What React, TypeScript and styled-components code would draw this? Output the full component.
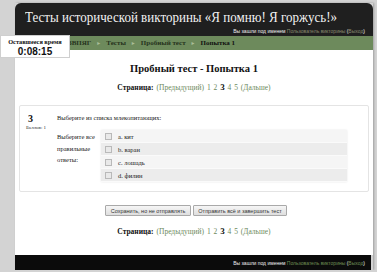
import React from 'react'
import styled, { createGlobalStyle } from 'styled-components'

const GlobalStyle = createGlobalStyle`
  html, body {
    margin: 0;
    padding: 0;
    background: #d3d3d3;
    font-family: 'Liberation Serif', 'Times New Roman', serif;
  }
`

const Page = styled.div`
  position: relative;
  width: 358px;
  margin: 3px 0 0 15px;
  box-shadow: 1px 0 2px rgba(0, 0, 0, 0.25);
`

const Header = styled.header`
  background: #1f1f1f;
  border-radius: 6px 6px 0 0;
  height: 33px;
  padding: 0 8px 0 10px;
  box-sizing: border-box;
  overflow: hidden;
`

const Title = styled.h1`
  margin: 0;
  padding-top: 3px;
  font-size: 15.5px;
  line-height: 21px;
  font-weight: normal;
  color: #f2f2f2;
  white-space: nowrap;
  transform: scaleX(0.84);
  transform-origin: left center;
`

const LoginInfo = styled.div<{ $dark?: boolean }>`
  text-align: right;
  font-size: 5px;
  line-height: 8px;
  color: #f0f0f0;
  font-family: 'Liberation Sans', Arial, sans-serif;
  a {
    color: ${(p) => (p.$dark ? '#6f8f55' : '#8a8a70')};
    text-decoration: none;
  }
`

const NavBar = styled.nav`
  background: #6d8a5c;
  height: 14px;
  display: flex;
  align-items: center;
  gap: 5px;
  padding-left: 32px;
  font-size: 7px;
  font-weight: bold;
  color: #1d2a16;
  white-space: nowrap;
`

const Crumb = styled.span<{ $current?: boolean }>`
  color: ${(p) => (p.$current ? '#101010' : '#26331c')};
`

const Sep = styled.span`
  color: #a9bd98;
  font-size: 5px;
`

const Timer = styled.div`
  position: absolute;
  left: -15px;
  top: 32px;
  width: 70px;
  height: 23px;
  background: #fff;
  border: 1px solid #cfcfcf;
  box-sizing: border-box;
  text-align: center;
`

const TimerLabel = styled.div`
  font-size: 6.3px;
  font-weight: bold;
  line-height: 9px;
  color: #111;
  padding-top: 1px;
`

const TimerValue = styled.div`
  font-family: 'Liberation Sans', Arial, sans-serif;
  font-size: 10px;
  font-weight: bold;
  line-height: 11px;
  color: #111;
`

const Content = styled.main`
  background: #fff;
  height: 205px;
  padding: 12px 4px 0;
  box-sizing: border-box;
`

const QuizTitle = styled.h2`
  margin: 0;
  text-align: center;
  font-size: 10.5px;
  line-height: 14px;
  font-weight: bold;
  color: #111;
`

const Paging = styled.div<{ $top: number }>`
  margin-top: ${(p) => p.$top}px;
  text-align: center;
  font-size: 7.5px;
  line-height: 10px;
  color: #6d8a5c;
  word-spacing: 1px;
  b {
    color: #111;
  }
  strong {
    color: #111;
    font-size: 9px;
  }
`

const Question = styled.section`
  margin-top: 12px;
  height: 87px;
  border: 1px solid #e4e4e4;
  border-radius: 2px;
  display: flex;
  padding: 7px 0 0 8px;
  box-sizing: border-box;
`

const Info = styled.div`
  width: 29px;
  flex: none;
`

const QNum = styled.div`
  font-size: 10px;
  font-weight: bold;
  line-height: 11px;
  color: #111;
`

const Grade = styled.div`
  margin-left: -2px;
  font-size: 5px;
  line-height: 7px;
  color: #333;
`

const QBody = styled.div`
  flex: 1;
  font-size: 6.5px;
  color: #222;
`

const QText = styled.div`
  line-height: 9px;
`

const Answer = styled.div`
  display: flex;
  margin-top: 8px;
`

const Prompt = styled.div`
  width: 44px;
  line-height: 11.5px;
  margin-top: 1px;
`

const Options = styled.div`
  width: 246px;
  background: #f3f3f3;
  box-shadow: 0 0 2px #e6e6e6;
`

const Option = styled.label<{ $alt?: boolean }>`
  display: flex;
  align-items: center;
  height: 13px;
  padding-left: 4px;
  background: ${(p) => (p.$alt ? '#ececec' : '#f5f5f5')};
  border-bottom: 1px solid #fafafa;
  box-sizing: border-box;
`

const Check = styled.span`
  width: 5px;
  height: 5px;
  border: 1px solid #b9b9b9;
  background: #e9e9e9;
  margin-right: 6px;
`

const Buttons = styled.div`
  margin-top: 13px;
  display: flex;
  justify-content: center;
  gap: 2px;
  padding-left: 4px;
`

const Button = styled.button<{ $w: number }>`
  width: ${(p) => p.$w}px;
  height: 11px;
  padding: 0;
  font-family: 'Liberation Sans', Arial, sans-serif;
  font-size: 5.5px;
  color: #333;
  background: linear-gradient(#f6f6f6, #dedede);
  border: 1px solid #a9a9a9;
  border-radius: 1px;
`

const Footer = styled.footer`
  background: #0b0b0b;
  height: 15px;
  margin-right: 2px;
  padding: 4px 6px 0;
  box-sizing: border-box;
`

const PageLinks = ({ top }: { top: number }) => (
  <Paging $top={top}>
    <b>Страница:</b> (Предыдущий) 1 2 <strong>3</strong> 4 5 (Дальше)
  </Paging>
)

const options = ['a. кит', 'b. варан', 'c. лошадь', 'd. филин']

export default function App() {
  return (
    <>
      <GlobalStyle />
      <Page>
        <Header>
          <Title>Тесты исторической викторины «Я помню! Я горжусь!»</Title>
          <LoginInfo>
            Вы зашли под именем <a>Пользователь викторины</a> (<a>Выход</a>)
          </LoginInfo>
        </Header>
        <NavBar>
          <Crumb>ГБОУ ЗВПЯГ</Crumb>
          <Sep>►</Sep>
          <Crumb>Тесты</Crumb>
          <Sep>►</Sep>
          <Crumb>Пробный тест</Crumb>
          <Sep>►</Sep>
          <Crumb $current>Попытка 1</Crumb>
        </NavBar>
        <Timer>
          <TimerLabel>Оставшееся время</TimerLabel>
          <TimerValue>0:08:15</TimerValue>
        </Timer>
        <Content>
          <QuizTitle>Пробный тест - Попытка 1</QuizTitle>
          <PageLinks top={6} />
          <Question>
            <Info>
              <QNum>3</QNum>
              <Grade>Баллов: 1</Grade>
            </Info>
            <QBody>
              <QText>Выберите из списка млекопитающих:</QText>
              <Answer>
                <Prompt>Выберите все правильные ответы:</Prompt>
                <Options>
                  {options.map((o, i) => (
                    <Option key={o} $alt={i % 2 === 1}>
                      <Check />
                      {o}
                    </Option>
                  ))}
                </Options>
              </Answer>
            </QBody>
          </Question>
          <Buttons>
            <Button $w={86}>Сохранить, но не отправлять</Button>
            <Button $w={94}>Отправить всё и завершить тест</Button>
          </Buttons>
          <PageLinks top={10} />
        </Content>
        <Footer>
          <LoginInfo $dark>
            Вы зашли под именем <a>Пользователь викторины</a> (<a>Выход</a>)
          </LoginInfo>
        </Footer>
      </Page>
    </>
  )
}
